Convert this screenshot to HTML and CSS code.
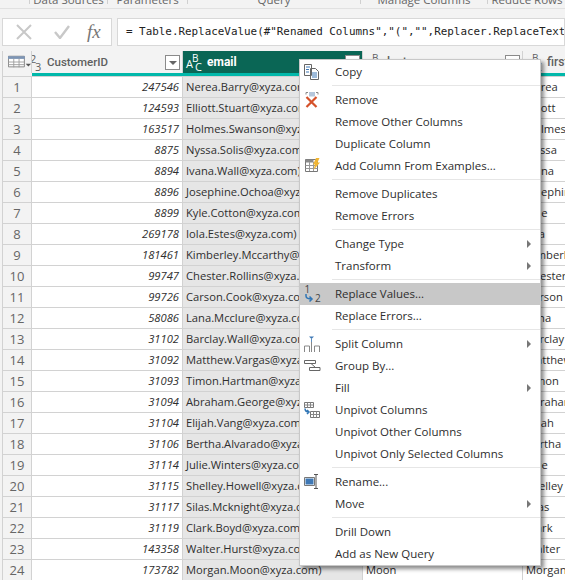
FILE: index.html
```html
<!DOCTYPE html>
<html lang="en">
<head>
    <meta charset="UTF-8">
    <meta name="viewport" content="width=device-width, initial-scale=1.0">
    <title>Power Query Editor</title>
    <link rel="stylesheet" href="styles.css">
</head>
<body>
    <div class="ribbon">
        <span class="group g1">Data Sources</span>
        <span class="group g2">Parameters</span>
        <span class="group g3">Query</span>
        <span class="group g4">Manage Columns</span>
        <span class="group g5">Reduce Rows</span>
    </div>

    <div class="formula-bar">
        <div class="fx-box">
            <svg class="fx-icon" width="16" height="16" viewBox="0 0 16 16"><path d="M1 1l14 14M15 1L1 15" stroke="#c8c8c8" stroke-width="2" fill="none"/></svg>
            <svg class="fx-icon" width="16" height="14" viewBox="0 0 16 14"><path d="M1 7l5 6L15 1" stroke="#c8c8c8" stroke-width="2.4" fill="none"/></svg>
            <span class="fx-label">fx</span>
        </div>
        <div class="formula">= Table.ReplaceValue(#"Renamed Columns","(","",Replacer.ReplaceText</div>
    </div>

    <div class="table">
        <div class="row head">
            <div class="cell corner">
                <svg width="26" height="14" viewBox="0 0 26 14"><path d="M.5.5h18v12H.5z" fill="#fff" stroke="#7a7a7a"/><path d="M0 .5h19v3H0z" fill="#7d95b5"/><path d="M.5 7h18M.5 10h18M6.5 3v10M12.5 3v10" stroke="#9a9a9a" fill="none"/><path d="M20 9h6l-3 3z" fill="#555"/></svg>
            </div>
            <div class="cell col-head id-head">
                <span class="type num"><i class="t1">2</i><i class="t2">3</i></span>
                <span class="name">CustomerID</span>
                <span class="drop"><b></b></span>
            </div>
            <div class="cell col-head picked">
                <span class="type"><i class="a">A</i><i class="b">B</i><i class="c">C</i></span>
                <span class="name">email</span>
                <span class="drop"></span>
            </div>
            <div class="cell col-head">
                <span class="type"><i class="a">A</i><i class="b">B</i><i class="c">C</i></span>
                <span class="name">last</span>
                <span class="drop"></span>
            </div>
            <div class="cell col-head">
                <span class="type"><i class="a">A</i><i class="b">B</i><i class="c">C</i></span>
                <span class="name">first</span>
            </div>
        </div>
        <div class="teal-line"><span></span><span></span></div>

        <div class="row"><div class="cell idx">1</div><div class="cell id">247546</div><div class="cell mail">Nerea.Barry@xyza.com)</div><div class="cell">Barry</div><div class="cell">Nerea</div></div>
        <div class="row"><div class="cell idx">2</div><div class="cell id">124593</div><div class="cell mail">Elliott.Stuart@xyza.com)</div><div class="cell">Stuart</div><div class="cell">Elliott</div></div>
        <div class="row"><div class="cell idx">3</div><div class="cell id">163517</div><div class="cell mail">Holmes.Swanson@xyza.com)</div><div class="cell">Swanson</div><div class="cell">Holmes</div></div>
        <div class="row"><div class="cell idx">4</div><div class="cell id">8875</div><div class="cell mail">Nyssa.Solis@xyza.com)</div><div class="cell">Solis</div><div class="cell">Nyssa</div></div>
        <div class="row"><div class="cell idx">5</div><div class="cell id">8894</div><div class="cell mail">Ivana.Wall@xyza.com)</div><div class="cell">Wall</div><div class="cell">Ivana</div></div>
        <div class="row"><div class="cell idx">6</div><div class="cell id">8896</div><div class="cell mail">Josephine.Ochoa@xyza.com)</div><div class="cell">Ochoa</div><div class="cell">Josephine</div></div>
        <div class="row"><div class="cell idx">7</div><div class="cell id">8899</div><div class="cell mail">Kyle.Cotton@xyza.com)</div><div class="cell">Cotton</div><div class="cell">Kyle</div></div>
        <div class="row"><div class="cell idx">8</div><div class="cell id">269178</div><div class="cell mail">Iola.Estes@xyza.com)</div><div class="cell">Estes</div><div class="cell">Iola</div></div>
        <div class="row"><div class="cell idx">9</div><div class="cell id">181461</div><div class="cell mail">Kimberley.Mccarthy@xyza.com)</div><div class="cell">Mccarthy</div><div class="cell">Kimberley</div></div>
        <div class="row"><div class="cell idx">10</div><div class="cell id">99747</div><div class="cell mail">Chester.Rollins@xyza.com)</div><div class="cell">Rollins</div><div class="cell">Chester</div></div>
        <div class="row"><div class="cell idx">11</div><div class="cell id">99726</div><div class="cell mail">Carson.Cook@xyza.com)</div><div class="cell">Cook</div><div class="cell">Carson</div></div>
        <div class="row"><div class="cell idx">12</div><div class="cell id">58086</div><div class="cell mail">Lana.Mcclure@xyza.com)</div><div class="cell">Mcclure</div><div class="cell">Lana</div></div>
        <div class="row"><div class="cell idx">13</div><div class="cell id">31102</div><div class="cell mail">Barclay.Wall@xyza.com)</div><div class="cell">Wall</div><div class="cell">Barclay</div></div>
        <div class="row"><div class="cell idx">14</div><div class="cell id">31092</div><div class="cell mail">Matthew.Vargas@xyza.com)</div><div class="cell">Vargas</div><div class="cell">Matthew</div></div>
        <div class="row"><div class="cell idx">15</div><div class="cell id">31093</div><div class="cell mail">Timon.Hartman@xyza.com)</div><div class="cell">Hartman</div><div class="cell">Timon</div></div>
        <div class="row"><div class="cell idx">16</div><div class="cell id">31094</div><div class="cell mail">Abraham.George@xyza.com)</div><div class="cell">George</div><div class="cell">Abraham</div></div>
        <div class="row"><div class="cell idx">17</div><div class="cell id">31104</div><div class="cell mail">Elijah.Vang@xyza.com)</div><div class="cell">Vang</div><div class="cell">Elijah</div></div>
        <div class="row"><div class="cell idx">18</div><div class="cell id">31106</div><div class="cell mail">Bertha.Alvarado@xyza.com)</div><div class="cell">Alvarado</div><div class="cell">Bertha</div></div>
        <div class="row"><div class="cell idx">19</div><div class="cell id">31114</div><div class="cell mail">Julie.Winters@xyza.com)</div><div class="cell">Winters</div><div class="cell">Julie</div></div>
        <div class="row"><div class="cell idx">20</div><div class="cell id">31115</div><div class="cell mail">Shelley.Howell@xyza.com)</div><div class="cell">Howell</div><div class="cell">Shelley</div></div>
        <div class="row"><div class="cell idx">21</div><div class="cell id">31117</div><div class="cell mail">Silas.Mcknight@xyza.com)</div><div class="cell">Mcknight</div><div class="cell">Silas</div></div>
        <div class="row"><div class="cell idx">22</div><div class="cell id">31119</div><div class="cell mail">Clark.Boyd@xyza.com)</div><div class="cell">Boyd</div><div class="cell">Clark</div></div>
        <div class="row"><div class="cell idx">23</div><div class="cell id">143358</div><div class="cell mail">Walter.Hurst@xyza.com)</div><div class="cell">Hurst</div><div class="cell">Walter</div></div>
        <div class="row"><div class="cell idx">24</div><div class="cell id">173782</div><div class="cell mail">Morgan.Moon@xyza.com)</div><div class="cell">Moon</div><div class="cell">Morgan</div></div>
    </div>

    <div class="menu">
        <div class="item">
            <svg class="ico" width="18" height="18" viewBox="0 0 18 18"><path d="M1.5 1.5h7v11h-7zM7.5 5.500h5l3 3v8h-8z" fill="#fff" stroke="#666"/><path d="M3 4h4M3 6.500h3M3 9h3M9 10h5M9 12h5M9 14h5" stroke="#3f78b5" fill="none"/></svg>
            <span>Copy</span>
        </div>
        <div class="sep"></div>
        <div class="item">
            <svg class="ico" width="18" height="18" viewBox="0 0 18 18"><path d="M5 1.500H3v2M13 1.500h2v2" stroke="#888" fill="none"/><path d="M6 1h6v4.500H6z" fill="#b5c7dc"/><path d="M3.500 6l10 10M13.500 6l-10 10" stroke="#d5512a" stroke-width="2.200" fill="none"/></svg>
            <span>Remove</span>
        </div>
        <div class="item"><span>Remove Other Columns</span></div>
        <div class="item"><span>Duplicate Column</span></div>
        <div class="item">
            <svg class="ico" width="18" height="18" viewBox="0 0 18 18"><path d="M2.500 2.500h12v12h-12z" fill="#fff" stroke="#777"/><path d="M2.500 2.500h8v3h-8z" fill="#8a8a8a"/><path d="M2.500 8.500h12M2.500 11.500h12M6.500 5v9M10.500 5v9" stroke="#999" fill="none"/><path d="M13 1h3.500l-2 4.500H17L10.500 13l1.500-5.500H10z" fill="#f2b632"/></svg>
            <span>Add Column From Examples...</span>
        </div>
        <div class="sep"></div>
        <div class="item"><span>Remove Duplicates</span></div>
        <div class="item"><span>Remove Errors</span></div>
        <div class="sep"></div>
        <div class="item more"><span>Change Type</span></div>
        <div class="item more"><span>Transform</span></div>
        <div class="sep"></div>
        <div class="item active">
            <svg class="ico" width="20" height="20" viewBox="0 0 20 20"><text x="1.500" y="8" class="ico-num">1</text><text x="12" y="17" class="ico-num">2</text><path d="M3 9v2c0 2 2 3 6 3M6.500 11.500L9 14l-2.500 2.500" stroke="#2f75b5" stroke-width="1.500" fill="none"/></svg>
            <span>Replace Values...</span>
        </div>
        <div class="item"><span>Replace Errors...</span></div>
        <div class="sep"></div>
        <div class="item more">
            <svg class="ico" width="18" height="18" viewBox="0 0 18 18"><path d="M1.500 17v-6h5v6M11.500 17v-6h5v6M8.500 7v10" stroke="#888" fill="none"/><path d="M6 1.500h5L8.500 4z" fill="#3f78b5"/><path d="M8.500 3.500V7" stroke="#5f90c0"/></svg>
            <span>Split Column</span>
        </div>
        <div class="item">
            <svg class="ico" width="18" height="18" viewBox="0 0 18 18"><path d="M1.500 3.500h11v3h-11zM6.500 10.500h10.500v3H6.500z" fill="#fff" stroke="#666"/><path d="M8 6.500l4.500 4" stroke="#666" fill="none"/></svg>
            <span>Group By...</span>
        </div>
        <div class="item more"><span>Fill</span></div>
        <div class="item">
            <svg class="ico" width="18" height="18" viewBox="0 0 18 18"><path d="M1.500 1.500h9v5h-9zM7.500 10.500h9v6h-9z" fill="#fff" stroke="#777"/><path d="M1.500 4h9M4.500 1.500v5M7.500 1.500v5M7.500 13.500h9M10.500 10.500v6M13.500 10.500v6" stroke="#888" fill="none"/><path d="M2 7.500c0 2.500 1 3.500 4 3.500M4 9l2 2-2 2" stroke="#2f75b5" stroke-width="1.500" fill="none"/></svg>
            <span>Unpivot Columns</span>
        </div>
        <div class="item"><span>Unpivot Other Columns</span></div>
        <div class="item"><span>Unpivot Only Selected Columns</span></div>
        <div class="sep"></div>
        <div class="item">
            <svg class="ico" width="18" height="18" viewBox="0 0 18 18"><path d="M1.500 4.500h10v8h-10z" fill="#fff" stroke="#777"/><path d="M2.500 5.500h8v6h-8z" fill="#3f78b5"/><path d="M11 1.500h4M11 15.500h4M13 1.500v14" stroke="#555" fill="none"/></svg>
            <span>Rename...</span>
        </div>
        <div class="item more"><span>Move</span></div>
        <div class="sep"></div>
        <div class="item"><span>Drill Down</span></div>
        <div class="item"><span>Add as New Query</span></div>
    </div>
</body>
</html>
```

FILE: styles.css
```css
body {
    margin: 0;
    width: 565px;
    height: 580px;
    overflow: hidden;
    position: relative;
    background-color: #f3f3f3;
    color: #2e2e2e;
    font-family: "Open Sans", sans-serif;
    font-size: 12px;
}

/* what is left of the ribbon above the formula bar */
.ribbon {
    height: 8px;
    overflow: hidden;
    display: flex;
    border-bottom: 1px solid #e1e1e1;
    color: #666;
    padding-left: 29px;
    font-size: 11.5px;
}
.group {
    height: 4px;
    line-height: 0;
    margin-top: -1px;
    padding-top: 1px;
    text-align: center;
    border-left: 1px solid #d0d0d0;
    flex: none;
}
.g1 { width: 77px; }
.g2 { width: 79px; }
.g3 { width: 172px; }
.g4 { width: 126px; }
.g5 { width: 78px; white-space: nowrap; }

.formula-bar {
    display: flex;
    gap: 5px;
    margin: 9px 0 0 2px;
    height: 28px;
}
.fx-box, .formula {
    background-color: #fff;
    border: 1px solid #d8d8d8;
    box-sizing: border-box;
    height: 100%;
}
.fx-box {
    width: 110px;
    display: flex;
    align-items: center;
    padding-left: 13px;
    gap: 22px;
}
.fx-label {
    font-family: "Liberation Serif", serif;
    font-style: italic;
    font-size: 19px;
    color: #777;
    margin-left: -5px;
}
.formula {
    flex: 1;
    overflow: hidden;
    white-space: pre;
    line-height: 26px;
    padding-left: 8px;
    font-family: "DejaVu Sans Mono", monospace;
    font-size: 10.9px;
    color: #222;
}

.table {
    margin: 5px 0 0 2px;
    border-left: 1px solid #d2d2d2;
}
.row {
    display: grid;
    grid-template-columns: 29px 151px 180px 160px 60px;
    height: 21px;
}
.cell {
    box-sizing: border-box;
    background-color: #fff;
    border-right: 1px solid #d2d2d2;
    border-bottom: 1px solid #d2d2d2;
    padding: 0 3px;
    line-height: 20px;
    overflow: hidden;
    white-space: nowrap;
    font-size: 11.2px;
}
.idx {
    background-color: #f3f3f3;
    color: #666;
    text-align: center;
    font-size: 13px;
    padding: 0;
}
.id {
    text-align: right;
    font-style: italic;
}
.mail { background-color: #e6e6e6; }

.head { height: 22px; }
.head .cell {
    background-color: #f3f3f3;
    border-bottom: none;
    position: relative;
    color: #5f5f5f;
}
.corner { display: flex; align-items: center; padding: 0 0 0 5px; }
.col-head .name {
    position: absolute;
    top: 1px;
    left: 24px;
    font-family: Roboto, sans-serif;
    font-weight: 500;
    font-size: 12px;
}
.id-head .name { left: 15px; font-size: 11.500px; }
.head .picked { background-color: #0a6655; color: #fff; }
.head .picked .name { font-weight: 700; }

.type {
    position: absolute;
    left: 3px;
    top: 0;
    width: 20px;
    height: 22px;
}
.type i {
    position: absolute;
    font-style: normal;
    font-size: 11px;
    line-height: 11px;
}
.type .a { left: 0; top: 7px; }
.type .b { left: 6px; top: 2px; font-size: 10px; }
.type .c { left: 9px; top: 10px; }
.num { left: 0; }
.num .t1 { left: -2px; top: 2px; }
.num .t2 { left: 3px; top: 10px; }

.drop {
    position: absolute;
    top: 4px;
    right: 2px;
    width: 15px;
    height: 15px;
    box-sizing: border-box;
    background-color: #fff;
    border: 1px solid #8a8a8a;
}
.drop b {
    display: block;
    width: 0;
    margin: 5px auto 0;
    border: 4px solid transparent;
    border-top: 4px solid #666;
    border-bottom: none;
}

.teal-line {
    display: grid;
    grid-template-columns: 29px 1fr;
    height: 3px;
    background-color: #01b8aa;
    border-bottom: 1px solid #d2d2d2;
}
.teal-line span:first-child { background-color: #f3f3f3; }

/* context menu, sits over the table */
.menu {
    position: absolute;
    left: 299px;
    top: 59px;
    width: 242px;
    height: 507px;
    box-sizing: border-box;
    padding-top: 1px;
    background-color: #fff;
    border: 1px solid #c8c8c8;
    box-shadow: 3px 3px 4px rgba(0, 0, 0, 0.45);
    font-size: 11.5px;
    color: #2e2e2e;
}
.item {
    height: 22px;
    line-height: 21px;
    padding-left: 35px;
    position: relative;
    white-space: nowrap;
}
.item.active { background-color: #c8c8c8; }
.more::after {
    content: "";
    position: absolute;
    right: 9px;
    top: 7px;
    border-left: 4px solid #777;
    border-top: 4px solid transparent;
    border-bottom: 4px solid transparent;
}
.sep {
    height: 1px;
    margin: 2px 0 3px 32px;
    background-color: #e6e6e6;
}
.ico {
    position: absolute;
    left: 3px;
    top: 2px;
}
.ico-num {
    font-family: "Open Sans", sans-serif;
    font-size: 10px;
    fill: #444;
}
```
